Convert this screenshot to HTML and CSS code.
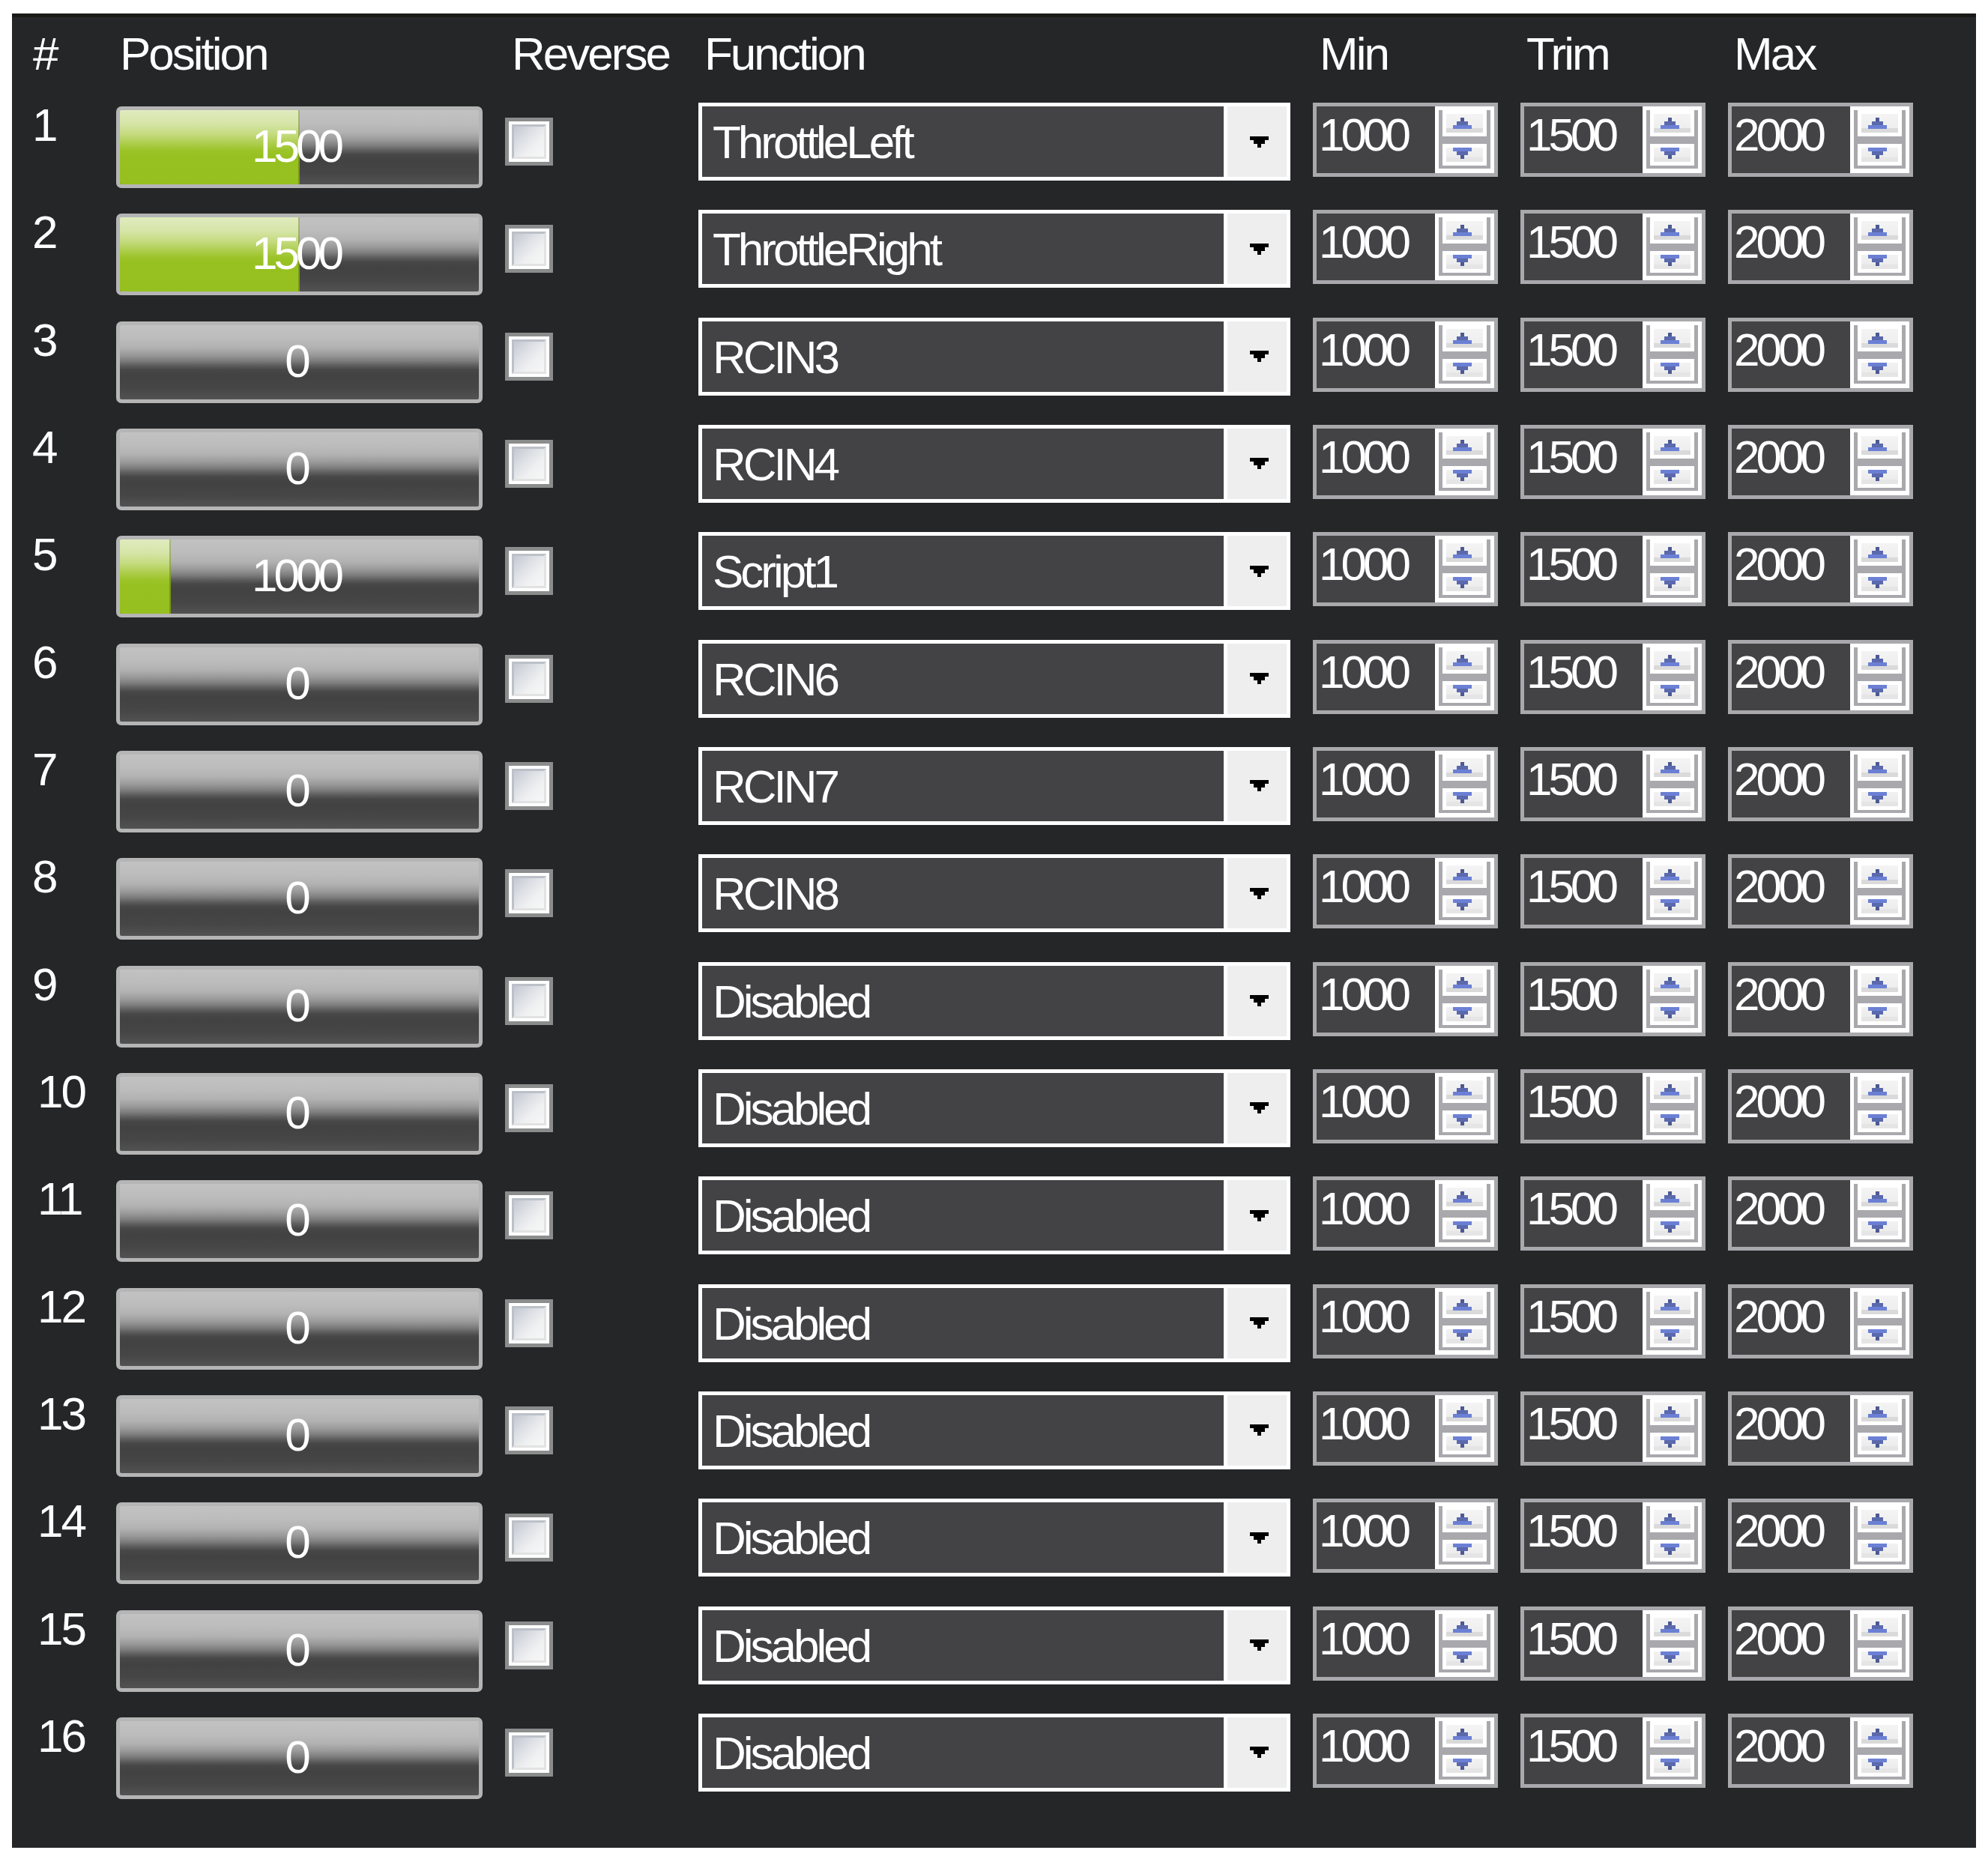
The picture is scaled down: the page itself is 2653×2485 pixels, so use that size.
FILE: index.html
```html
<!DOCTYPE html>
<html>
<head>
<meta charset="utf-8">
<link rel="stylesheet" href="styles.css">
</head>
<body>
<svg class="defs" width="0" height="0" aria-hidden="true">
  <defs>
    <symbol id="dd" viewBox="0 0 25 15"><path d="M0 0H25V5H20V10H15V15H10V10H5V5H0Z" fill="#000"/></symbol>
    <symbol id="up" viewBox="0 0 25 15"><rect x="10" y="0" width="5" height="5" fill="#4d5a92"/><rect x="5" y="5" width="15" height="5" fill="#5b69ad"/><rect x="0" y="10" width="25" height="5" fill="#6b80d4"/></symbol>
    <symbol id="dn" viewBox="0 0 25 15"><rect x="0" y="0" width="25" height="5" fill="#6b80d4"/><rect x="5" y="5" width="15" height="5" fill="#5b69ad"/><rect x="10" y="10" width="5" height="5" fill="#4d5a92"/></symbol>
  </defs>
</svg>
<div class="panel">
  <div class="table">
    <div class="h h-num">#</div>
    <div class="h h-pos">Position</div>
    <div class="h h-rev">Reverse</div>
    <div class="h h-func">Function</div>
    <div class="h h-min">Min</div>
    <div class="h h-trim">Trim</div>
    <div class="h h-max">Max</div>

    <div class="num">1</div>
    <div class="poscell"><div class="bar"><div class="fill" style="width:50%"></div><div class="val">1500</div></div></div>
    <div class="revcell"><div class="cb"><div class="cbi"></div></div></div>
    <div class="funccell"><div class="combo"><div class="ctext">ThrottleLeft</div><div class="cbtn"><svg class="carr"><use href="#dd"/></svg></div></div></div>
    <div class="spin"><div class="stext">1000</div><div class="sbtns"><div class="sframe"><div class="sup"><svg class="sa"><use href="#up"/></svg></div><div class="sdn"><svg class="sa"><use href="#dn"/></svg></div></div></div></div>
    <div class="spin"><div class="stext">1500</div><div class="sbtns"><div class="sframe"><div class="sup"><svg class="sa"><use href="#up"/></svg></div><div class="sdn"><svg class="sa"><use href="#dn"/></svg></div></div></div></div>
    <div class="spin"><div class="stext">2000</div><div class="sbtns"><div class="sframe"><div class="sup"><svg class="sa"><use href="#up"/></svg></div><div class="sdn"><svg class="sa"><use href="#dn"/></svg></div></div></div></div>

    <div class="num">2</div>
    <div class="poscell"><div class="bar"><div class="fill" style="width:50%"></div><div class="val">1500</div></div></div>
    <div class="revcell"><div class="cb"><div class="cbi"></div></div></div>
    <div class="funccell"><div class="combo"><div class="ctext">ThrottleRight</div><div class="cbtn"><svg class="carr"><use href="#dd"/></svg></div></div></div>
    <div class="spin"><div class="stext">1000</div><div class="sbtns"><div class="sframe"><div class="sup"><svg class="sa"><use href="#up"/></svg></div><div class="sdn"><svg class="sa"><use href="#dn"/></svg></div></div></div></div>
    <div class="spin"><div class="stext">1500</div><div class="sbtns"><div class="sframe"><div class="sup"><svg class="sa"><use href="#up"/></svg></div><div class="sdn"><svg class="sa"><use href="#dn"/></svg></div></div></div></div>
    <div class="spin"><div class="stext">2000</div><div class="sbtns"><div class="sframe"><div class="sup"><svg class="sa"><use href="#up"/></svg></div><div class="sdn"><svg class="sa"><use href="#dn"/></svg></div></div></div></div>

    <div class="num">3</div>
    <div class="poscell"><div class="bar"><div class="val">0</div></div></div>
    <div class="revcell"><div class="cb"><div class="cbi"></div></div></div>
    <div class="funccell"><div class="combo"><div class="ctext">RCIN3</div><div class="cbtn"><svg class="carr"><use href="#dd"/></svg></div></div></div>
    <div class="spin"><div class="stext">1000</div><div class="sbtns"><div class="sframe"><div class="sup"><svg class="sa"><use href="#up"/></svg></div><div class="sdn"><svg class="sa"><use href="#dn"/></svg></div></div></div></div>
    <div class="spin"><div class="stext">1500</div><div class="sbtns"><div class="sframe"><div class="sup"><svg class="sa"><use href="#up"/></svg></div><div class="sdn"><svg class="sa"><use href="#dn"/></svg></div></div></div></div>
    <div class="spin"><div class="stext">2000</div><div class="sbtns"><div class="sframe"><div class="sup"><svg class="sa"><use href="#up"/></svg></div><div class="sdn"><svg class="sa"><use href="#dn"/></svg></div></div></div></div>

    <div class="num">4</div>
    <div class="poscell"><div class="bar"><div class="val">0</div></div></div>
    <div class="revcell"><div class="cb"><div class="cbi"></div></div></div>
    <div class="funccell"><div class="combo"><div class="ctext">RCIN4</div><div class="cbtn"><svg class="carr"><use href="#dd"/></svg></div></div></div>
    <div class="spin"><div class="stext">1000</div><div class="sbtns"><div class="sframe"><div class="sup"><svg class="sa"><use href="#up"/></svg></div><div class="sdn"><svg class="sa"><use href="#dn"/></svg></div></div></div></div>
    <div class="spin"><div class="stext">1500</div><div class="sbtns"><div class="sframe"><div class="sup"><svg class="sa"><use href="#up"/></svg></div><div class="sdn"><svg class="sa"><use href="#dn"/></svg></div></div></div></div>
    <div class="spin"><div class="stext">2000</div><div class="sbtns"><div class="sframe"><div class="sup"><svg class="sa"><use href="#up"/></svg></div><div class="sdn"><svg class="sa"><use href="#dn"/></svg></div></div></div></div>

    <div class="num">5</div>
    <div class="poscell"><div class="bar"><div class="fill" style="width:14.29%"></div><div class="val">1000</div></div></div>
    <div class="revcell"><div class="cb"><div class="cbi"></div></div></div>
    <div class="funccell"><div class="combo"><div class="ctext">Script1</div><div class="cbtn"><svg class="carr"><use href="#dd"/></svg></div></div></div>
    <div class="spin"><div class="stext">1000</div><div class="sbtns"><div class="sframe"><div class="sup"><svg class="sa"><use href="#up"/></svg></div><div class="sdn"><svg class="sa"><use href="#dn"/></svg></div></div></div></div>
    <div class="spin"><div class="stext">1500</div><div class="sbtns"><div class="sframe"><div class="sup"><svg class="sa"><use href="#up"/></svg></div><div class="sdn"><svg class="sa"><use href="#dn"/></svg></div></div></div></div>
    <div class="spin"><div class="stext">2000</div><div class="sbtns"><div class="sframe"><div class="sup"><svg class="sa"><use href="#up"/></svg></div><div class="sdn"><svg class="sa"><use href="#dn"/></svg></div></div></div></div>

    <div class="num">6</div>
    <div class="poscell"><div class="bar"><div class="val">0</div></div></div>
    <div class="revcell"><div class="cb"><div class="cbi"></div></div></div>
    <div class="funccell"><div class="combo"><div class="ctext">RCIN6</div><div class="cbtn"><svg class="carr"><use href="#dd"/></svg></div></div></div>
    <div class="spin"><div class="stext">1000</div><div class="sbtns"><div class="sframe"><div class="sup"><svg class="sa"><use href="#up"/></svg></div><div class="sdn"><svg class="sa"><use href="#dn"/></svg></div></div></div></div>
    <div class="spin"><div class="stext">1500</div><div class="sbtns"><div class="sframe"><div class="sup"><svg class="sa"><use href="#up"/></svg></div><div class="sdn"><svg class="sa"><use href="#dn"/></svg></div></div></div></div>
    <div class="spin"><div class="stext">2000</div><div class="sbtns"><div class="sframe"><div class="sup"><svg class="sa"><use href="#up"/></svg></div><div class="sdn"><svg class="sa"><use href="#dn"/></svg></div></div></div></div>

    <div class="num">7</div>
    <div class="poscell"><div class="bar"><div class="val">0</div></div></div>
    <div class="revcell"><div class="cb"><div class="cbi"></div></div></div>
    <div class="funccell"><div class="combo"><div class="ctext">RCIN7</div><div class="cbtn"><svg class="carr"><use href="#dd"/></svg></div></div></div>
    <div class="spin"><div class="stext">1000</div><div class="sbtns"><div class="sframe"><div class="sup"><svg class="sa"><use href="#up"/></svg></div><div class="sdn"><svg class="sa"><use href="#dn"/></svg></div></div></div></div>
    <div class="spin"><div class="stext">1500</div><div class="sbtns"><div class="sframe"><div class="sup"><svg class="sa"><use href="#up"/></svg></div><div class="sdn"><svg class="sa"><use href="#dn"/></svg></div></div></div></div>
    <div class="spin"><div class="stext">2000</div><div class="sbtns"><div class="sframe"><div class="sup"><svg class="sa"><use href="#up"/></svg></div><div class="sdn"><svg class="sa"><use href="#dn"/></svg></div></div></div></div>

    <div class="num">8</div>
    <div class="poscell"><div class="bar"><div class="val">0</div></div></div>
    <div class="revcell"><div class="cb"><div class="cbi"></div></div></div>
    <div class="funccell"><div class="combo"><div class="ctext">RCIN8</div><div class="cbtn"><svg class="carr"><use href="#dd"/></svg></div></div></div>
    <div class="spin"><div class="stext">1000</div><div class="sbtns"><div class="sframe"><div class="sup"><svg class="sa"><use href="#up"/></svg></div><div class="sdn"><svg class="sa"><use href="#dn"/></svg></div></div></div></div>
    <div class="spin"><div class="stext">1500</div><div class="sbtns"><div class="sframe"><div class="sup"><svg class="sa"><use href="#up"/></svg></div><div class="sdn"><svg class="sa"><use href="#dn"/></svg></div></div></div></div>
    <div class="spin"><div class="stext">2000</div><div class="sbtns"><div class="sframe"><div class="sup"><svg class="sa"><use href="#up"/></svg></div><div class="sdn"><svg class="sa"><use href="#dn"/></svg></div></div></div></div>

    <div class="num">9</div>
    <div class="poscell"><div class="bar"><div class="val">0</div></div></div>
    <div class="revcell"><div class="cb"><div class="cbi"></div></div></div>
    <div class="funccell"><div class="combo"><div class="ctext">Disabled</div><div class="cbtn"><svg class="carr"><use href="#dd"/></svg></div></div></div>
    <div class="spin"><div class="stext">1000</div><div class="sbtns"><div class="sframe"><div class="sup"><svg class="sa"><use href="#up"/></svg></div><div class="sdn"><svg class="sa"><use href="#dn"/></svg></div></div></div></div>
    <div class="spin"><div class="stext">1500</div><div class="sbtns"><div class="sframe"><div class="sup"><svg class="sa"><use href="#up"/></svg></div><div class="sdn"><svg class="sa"><use href="#dn"/></svg></div></div></div></div>
    <div class="spin"><div class="stext">2000</div><div class="sbtns"><div class="sframe"><div class="sup"><svg class="sa"><use href="#up"/></svg></div><div class="sdn"><svg class="sa"><use href="#dn"/></svg></div></div></div></div>

    <div class="num two">10</div>
    <div class="poscell"><div class="bar"><div class="val">0</div></div></div>
    <div class="revcell"><div class="cb"><div class="cbi"></div></div></div>
    <div class="funccell"><div class="combo"><div class="ctext">Disabled</div><div class="cbtn"><svg class="carr"><use href="#dd"/></svg></div></div></div>
    <div class="spin"><div class="stext">1000</div><div class="sbtns"><div class="sframe"><div class="sup"><svg class="sa"><use href="#up"/></svg></div><div class="sdn"><svg class="sa"><use href="#dn"/></svg></div></div></div></div>
    <div class="spin"><div class="stext">1500</div><div class="sbtns"><div class="sframe"><div class="sup"><svg class="sa"><use href="#up"/></svg></div><div class="sdn"><svg class="sa"><use href="#dn"/></svg></div></div></div></div>
    <div class="spin"><div class="stext">2000</div><div class="sbtns"><div class="sframe"><div class="sup"><svg class="sa"><use href="#up"/></svg></div><div class="sdn"><svg class="sa"><use href="#dn"/></svg></div></div></div></div>

    <div class="num two">11</div>
    <div class="poscell"><div class="bar"><div class="val">0</div></div></div>
    <div class="revcell"><div class="cb"><div class="cbi"></div></div></div>
    <div class="funccell"><div class="combo"><div class="ctext">Disabled</div><div class="cbtn"><svg class="carr"><use href="#dd"/></svg></div></div></div>
    <div class="spin"><div class="stext">1000</div><div class="sbtns"><div class="sframe"><div class="sup"><svg class="sa"><use href="#up"/></svg></div><div class="sdn"><svg class="sa"><use href="#dn"/></svg></div></div></div></div>
    <div class="spin"><div class="stext">1500</div><div class="sbtns"><div class="sframe"><div class="sup"><svg class="sa"><use href="#up"/></svg></div><div class="sdn"><svg class="sa"><use href="#dn"/></svg></div></div></div></div>
    <div class="spin"><div class="stext">2000</div><div class="sbtns"><div class="sframe"><div class="sup"><svg class="sa"><use href="#up"/></svg></div><div class="sdn"><svg class="sa"><use href="#dn"/></svg></div></div></div></div>

    <div class="num two">12</div>
    <div class="poscell"><div class="bar"><div class="val">0</div></div></div>
    <div class="revcell"><div class="cb"><div class="cbi"></div></div></div>
    <div class="funccell"><div class="combo"><div class="ctext">Disabled</div><div class="cbtn"><svg class="carr"><use href="#dd"/></svg></div></div></div>
    <div class="spin"><div class="stext">1000</div><div class="sbtns"><div class="sframe"><div class="sup"><svg class="sa"><use href="#up"/></svg></div><div class="sdn"><svg class="sa"><use href="#dn"/></svg></div></div></div></div>
    <div class="spin"><div class="stext">1500</div><div class="sbtns"><div class="sframe"><div class="sup"><svg class="sa"><use href="#up"/></svg></div><div class="sdn"><svg class="sa"><use href="#dn"/></svg></div></div></div></div>
    <div class="spin"><div class="stext">2000</div><div class="sbtns"><div class="sframe"><div class="sup"><svg class="sa"><use href="#up"/></svg></div><div class="sdn"><svg class="sa"><use href="#dn"/></svg></div></div></div></div>

    <div class="num two">13</div>
    <div class="poscell"><div class="bar"><div class="val">0</div></div></div>
    <div class="revcell"><div class="cb"><div class="cbi"></div></div></div>
    <div class="funccell"><div class="combo"><div class="ctext">Disabled</div><div class="cbtn"><svg class="carr"><use href="#dd"/></svg></div></div></div>
    <div class="spin"><div class="stext">1000</div><div class="sbtns"><div class="sframe"><div class="sup"><svg class="sa"><use href="#up"/></svg></div><div class="sdn"><svg class="sa"><use href="#dn"/></svg></div></div></div></div>
    <div class="spin"><div class="stext">1500</div><div class="sbtns"><div class="sframe"><div class="sup"><svg class="sa"><use href="#up"/></svg></div><div class="sdn"><svg class="sa"><use href="#dn"/></svg></div></div></div></div>
    <div class="spin"><div class="stext">2000</div><div class="sbtns"><div class="sframe"><div class="sup"><svg class="sa"><use href="#up"/></svg></div><div class="sdn"><svg class="sa"><use href="#dn"/></svg></div></div></div></div>

    <div class="num two">14</div>
    <div class="poscell"><div class="bar"><div class="val">0</div></div></div>
    <div class="revcell"><div class="cb"><div class="cbi"></div></div></div>
    <div class="funccell"><div class="combo"><div class="ctext">Disabled</div><div class="cbtn"><svg class="carr"><use href="#dd"/></svg></div></div></div>
    <div class="spin"><div class="stext">1000</div><div class="sbtns"><div class="sframe"><div class="sup"><svg class="sa"><use href="#up"/></svg></div><div class="sdn"><svg class="sa"><use href="#dn"/></svg></div></div></div></div>
    <div class="spin"><div class="stext">1500</div><div class="sbtns"><div class="sframe"><div class="sup"><svg class="sa"><use href="#up"/></svg></div><div class="sdn"><svg class="sa"><use href="#dn"/></svg></div></div></div></div>
    <div class="spin"><div class="stext">2000</div><div class="sbtns"><div class="sframe"><div class="sup"><svg class="sa"><use href="#up"/></svg></div><div class="sdn"><svg class="sa"><use href="#dn"/></svg></div></div></div></div>

    <div class="num two">15</div>
    <div class="poscell"><div class="bar"><div class="val">0</div></div></div>
    <div class="revcell"><div class="cb"><div class="cbi"></div></div></div>
    <div class="funccell"><div class="combo"><div class="ctext">Disabled</div><div class="cbtn"><svg class="carr"><use href="#dd"/></svg></div></div></div>
    <div class="spin"><div class="stext">1000</div><div class="sbtns"><div class="sframe"><div class="sup"><svg class="sa"><use href="#up"/></svg></div><div class="sdn"><svg class="sa"><use href="#dn"/></svg></div></div></div></div>
    <div class="spin"><div class="stext">1500</div><div class="sbtns"><div class="sframe"><div class="sup"><svg class="sa"><use href="#up"/></svg></div><div class="sdn"><svg class="sa"><use href="#dn"/></svg></div></div></div></div>
    <div class="spin"><div class="stext">2000</div><div class="sbtns"><div class="sframe"><div class="sup"><svg class="sa"><use href="#up"/></svg></div><div class="sdn"><svg class="sa"><use href="#dn"/></svg></div></div></div></div>

    <div class="num two">16</div>
    <div class="poscell"><div class="bar"><div class="val">0</div></div></div>
    <div class="revcell"><div class="cb"><div class="cbi"></div></div></div>
    <div class="funccell"><div class="combo"><div class="ctext">Disabled</div><div class="cbtn"><svg class="carr"><use href="#dd"/></svg></div></div></div>
    <div class="spin"><div class="stext">1000</div><div class="sbtns"><div class="sframe"><div class="sup"><svg class="sa"><use href="#up"/></svg></div><div class="sdn"><svg class="sa"><use href="#dn"/></svg></div></div></div></div>
    <div class="spin"><div class="stext">1500</div><div class="sbtns"><div class="sframe"><div class="sup"><svg class="sa"><use href="#up"/></svg></div><div class="sdn"><svg class="sa"><use href="#dn"/></svg></div></div></div></div>
    <div class="spin"><div class="stext">2000</div><div class="sbtns"><div class="sframe"><div class="sup"><svg class="sa"><use href="#up"/></svg></div><div class="sdn"><svg class="sa"><use href="#dn"/></svg></div></div></div></div>
  </div>
</div>
</body>
</html>
```

FILE: styles.css
```css
html, body {
  margin: 0;
  padding: 0;
  background: #ffffff;
}

.defs {
  position: absolute;
  width: 0;
  height: 0;
  overflow: hidden;
}

.panel {
  margin: 18px 0 0 16px;
  width: 2621px;
  height: 2448px;
  box-sizing: border-box;
  background: #252628;
  border-top: 5px solid #1a1917;
  padding-top: 18px;
  font-family: "Liberation Sans", Arial, sans-serif;
  font-size: 62px;
  line-height: 62px;
  color: #ffffff;
}

.table {
  display: grid;
  grid-template-columns: 139px 519px 258px 820px 277px 277px 247px;
  grid-template-rows: 96px repeat(16, 143.333px);
  align-items: start;
}

/* headers */
.h {
  line-height: 62px;
  letter-spacing: -3px;
  white-space: nowrap;
}
.h-num { padding-left: 28px; }
.h-pos { padding-left: 5px; }
.h-rev { padding-left: 9px; }
.h-func { padding-left: 8px; }
.h-min { padding-left: 9px; }
.h-trim { padding-left: 8px; }
.h-max { padding-left: 8px; }

/* row number */
.num {
  padding-left: 27px;
  margin-top: -1px;
  letter-spacing: -3px;
}
.num.two { padding-left: 34px; }

/* position bar */
.poscell { padding-top: 5px; }
.bar {
  width: 489px;
  height: 109px;
  box-sizing: border-box;
  border: 5px solid #b5b5b5;
  border-radius: 7px;
  overflow: hidden;
  display: grid;
  background: linear-gradient(to bottom,
    #c2c2c2 0%, #bcbcbc 18%, #b2b2b2 30%, #9a9a9a 40%,
    #7d7d7d 48%, #5f5f5f 54%, #474747 60%, #424242 68%,
    #464646 85%, #525252 100%);
}
.fill {
  grid-area: 1 / 1;
  justify-self: start;
  height: 100%;
  background: linear-gradient(to bottom,
    #e0ebbf 0%, #d6e5a8 18%, #c5db80 32%, #abcc48 46%,
    #9cc42a 54%, #97c120 62%, #95c01f 100%);
  box-shadow: inset -2px 0 0 rgba(60, 80, 10, 0.35);
}
.val {
  grid-area: 1 / 1;
  align-self: center;
  text-align: center;
  letter-spacing: -5px;
  padding: 0 9px 3px 0;
}

/* checkbox */
.revcell { padding-top: 20px; }
.cb {
  width: 64px;
  height: 64px;
  box-sizing: border-box;
  border: 5px solid #8b8c8c;
  background: #ffffff;
  padding: 4px;
}
.cbi {
  width: 46px;
  height: 46px;
  box-sizing: border-box;
  border: 3px solid;
  border-color: #bcc0c8 #e2e2e2 #e2e2e2 #bcc0c8;
  background: linear-gradient(to bottom right, #c4c8d2 0%, #dcdfe4 35%, #eff0f1 65%, #f7f7f7 100%);
}

/* combo */
.combo {
  width: 790px;
  height: 104px;
  box-sizing: border-box;
  border: 5px solid #ffffff;
  background: #ffffff;
  display: flex;
}
.ctext {
  flex: 1;
  margin-right: 5px;
  background: #434345;
  display: flex;
  align-items: center;
  padding: 2px 0 0 14px;
  box-sizing: border-box;
  letter-spacing: -4px;
  white-space: nowrap;
}
.cbtn {
  width: 79px;
  background: #eeeeee;
  display: flex;
  align-items: center;
  justify-content: center;
  padding-left: 6px;
  box-sizing: border-box;
}
.carr {
  width: 25px;
  height: 15px;
  display: block;
}

/* spinner */
.spin {
  width: 247px;
  height: 99px;
  box-sizing: border-box;
  border: 5px solid #a9a9ad;
  display: flex;
}
.stext {
  width: 158px;
  background: #434345;
  padding: 7px 0 0 3px;
  box-sizing: border-box;
  letter-spacing: -5px;
}
.sbtns {
  flex: 1;
  background: #ffffff;
  padding: 5px 5px 6px 5px;
}
.sframe {
  height: 100%;
  box-sizing: border-box;
  background: #a9a9ad;
  padding: 0 5px 4px 5px;
  display: flex;
  flex-direction: column;
  gap: 10px;
}
.sup, .sdn {
  box-sizing: border-box;
  border: 5px solid #ffffff;
}
.sup {
  height: 35px;
  background: linear-gradient(to bottom, #f4f4f4 0%, #eeeeee 76%, #dadada 76%, #dadada 100%);
}
.sdn {
  height: 29px;
  background: linear-gradient(to bottom, #f2f2f2 0%, #ececec 70%, #e5e5e5 70%, #e5e5e5 100%);
}
.sa {
  width: 25px;
  height: 15px;
  display: block;
  margin-left: 9px;
}
.sup .sa { margin-top: 5px; }
.sdn .sa { margin-top: 0; }
```
